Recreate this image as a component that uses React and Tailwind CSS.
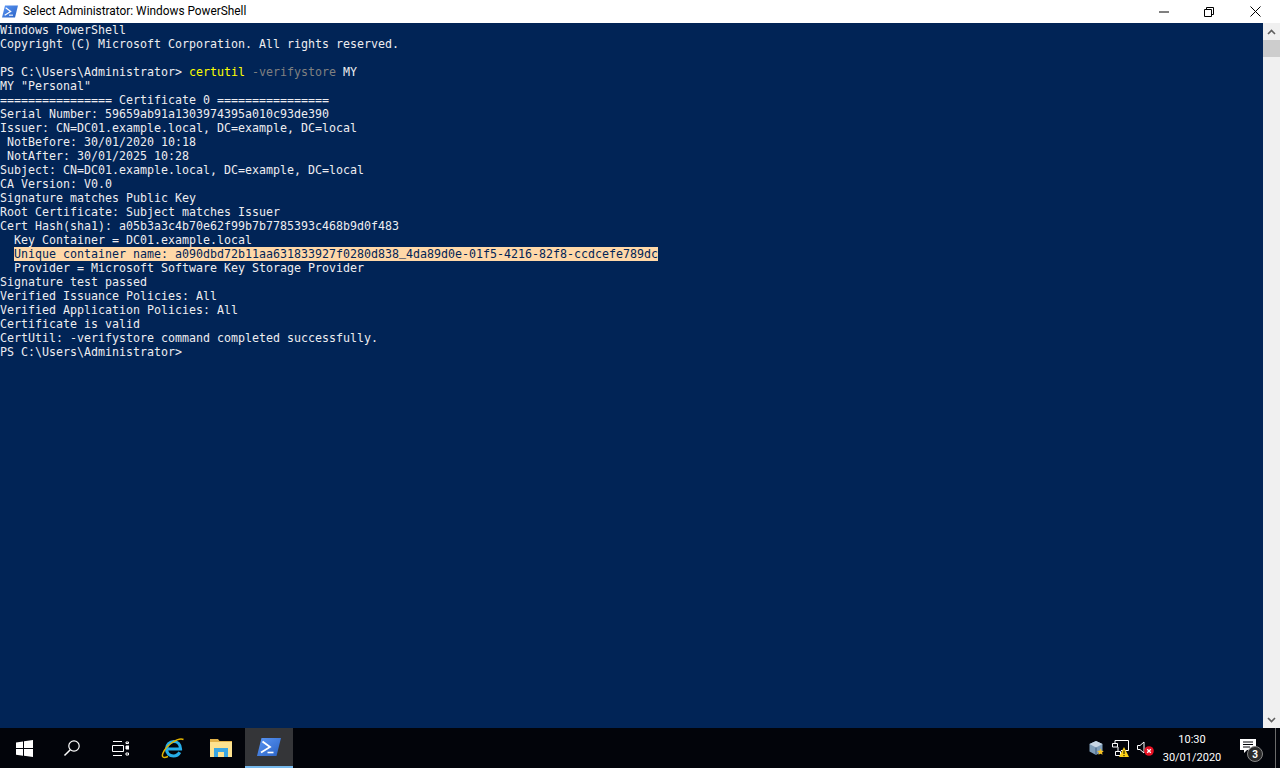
const lines = [
  'Windows PowerShell',
  'Copyright (C) Microsoft Corporation. All rights reserved.',
  '',
  'PROMPT',
  'MY "Personal"',
  '================ Certificate 0 ================',
  'Serial Number: 59659ab91a1303974395a010c93de390',
  'Issuer: CN=DC01.example.local, DC=example, DC=local',
  ' NotBefore: 30/01/2020 10:18',
  ' NotAfter: 30/01/2025 10:28',
  'Subject: CN=DC01.example.local, DC=example, DC=local',
  'CA Version: V0.0',
  'Signature matches Public Key',
  'Root Certificate: Subject matches Issuer',
  'Cert Hash(sha1): a05b3a3c4b70e62f99b7b7785393c468b9d0f483',
  '  Key Container = DC01.example.local',
  'HIGHLIGHT',
  '  Provider = Microsoft Software Key Storage Provider',
  'Signature test passed',
  'Verified Issuance Policies: All',
  'Verified Application Policies: All',
  'Certificate is valid',
  'CertUtil: -verifystore command completed successfully.',
  'PS C:\\Users\\Administrator>',
]

function Line({ text }) {
  if (text === 'PROMPT') {
    return (
      <div>
        PS C:\Users\Administrator&gt; <span className="text-[#ffff00]">certutil</span>{' '}
        <span className="text-[#808080]">-verifystore</span> MY
      </div>
    )
  }
  if (text === 'HIGHLIGHT') {
    // DejaVu's underscore lands under the highlight box, Liberation's stays inside it
    return (
      <div className="h-[14px]">
        {'  '}
        <span className="inline-block h-[14px] bg-[#ffd8a8] text-[#012456]">
          Unique container name: a090dbd72b11aa631833927f0280d838<span className="font-['Liberation_Mono',monospace]">_</span>4da89d0e-01f5-4216-82f8-ccdcefe789dc
        </span>
      </div>
    )
  }
  return <div className="h-[14px]">{text}</div>
}

function PsIcon({ id, width, height }) {
  return (
    <svg width={width} height={height} viewBox="0 0 24 18">
      <defs>
        <linearGradient id={id} x1="0" y1="0" x2="1" y2="1">
          <stop offset="0" stopColor="#5a96f5" />
          <stop offset="1" stopColor="#2a62c4" />
        </linearGradient>
      </defs>
      <path d="M4.500 0H24l-4.500 18H0z" fill={`url(#${id})`} />
      <path d="M5.500 3.500l7.500 5.500-9 5.500" fill="none" stroke="#fff" strokeWidth="1.800" />
      <path d="M10.500 14.500h6" stroke="#fff" strokeWidth="1.600" />
    </svg>
  )
}

function TitleBar() {
  return (
    <div className="h-[23px] bg-white flex items-center shrink-0">
      <div className="w-[23px] pl-[2px] flex items-center"><PsIcon id="ps-title" width={16} height={13} /></div>
      <span className="text-[11.85px] text-black font-['Roboto','Liberation_Sans',sans-serif]">Select Administrator: Windows PowerShell</span>
      <div className="ml-auto mr-[2px] flex items-center h-full">
        <div className="w-[46px] pl-[2px] h-full flex items-center justify-center">
          <svg width="10" height="10" viewBox="0 0 10 10"><path d="M0 5h10" stroke="#000" /></svg>
        </div>
        <div className="w-[46px] h-full flex items-center justify-center">
          <svg width="10" height="10" viewBox="0 0 10 10" fill="none" stroke="#000"><path d="M.5 2.500h7v7h-7zM2.500 2.500v-2h7v7h-2" /></svg>
        </div>
        <div className="w-[46px] h-full flex items-center justify-center">
          <svg width="11" height="11" viewBox="0 0 11 11" stroke="#000"><path d="M.5.5l10 10M10.500.5l-10 10" /></svg>
        </div>
      </div>
    </div>
  )
}

function Scrollbar() {
  return (
    <div className="w-[17px] bg-[#f0f0f0] flex flex-col shrink-0">
      <div className="h-[17px] flex items-center justify-center">
        <svg width="9" height="6" viewBox="0 0 9 6" fill="none" stroke="#606060" strokeWidth="1.600"><path d="M1 5l3.500-3.500L8 5" /></svg>
      </div>
      <div className="h-[17px] bg-[#cdcdcd]" />
      <div className="flex-1" />
      <div className="h-[17px] flex items-center justify-center">
        <svg width="9" height="6" viewBox="0 0 9 6" fill="none" stroke="#606060" strokeWidth="1.600"><path d="M1 1l3.500 3.500L8 1" /></svg>
      </div>
    </div>
  )
}

function TaskButton({ children, active }) {
  return (
    <div className={active
      ? 'w-[48px] h-full flex items-center justify-center bg-[#343538] border-b-[2px] border-[#76b9ed]'
      : 'w-[48px] h-full flex items-center justify-center'}>
      {children}
    </div>
  )
}

function Taskbar() {
  return (
    <div className="h-[40px] bg-[#02040a] flex items-center text-white shrink-0">
      <TaskButton>
        <svg width="17" height="17" viewBox="0 0 17 17" fill="#fff"><path d="M0 2.400l7-1v6.700H0zM8 1.300l9-1.300v8.100H8zM0 9h7v6.700l-7-1zM8 9h9v8l-9-1.300z" /></svg>
      </TaskButton>
      <TaskButton>
        <svg width="18" height="18" viewBox="0 0 18 18" fill="none" stroke="#fff" strokeWidth="1.200"><circle cx="11" cy="7" r="5.200" /><path d="M7.300 10.700L1.500 16.500" strokeWidth="1.500" /></svg>
      </TaskButton>
      <TaskButton>
        <svg width="17" height="15" viewBox="0 0 17 15" fill="none" stroke="#fff"><path d="M1 .5h9M1 14.500h9M.5 4.500h11v6H.5z" /><path d="M14 1h2.500v1.500H14z" /><path d="M14 5h3v3h-3z" fill="#fff" /><path d="M14 12h2.500v2H14z" /></svg>
      </TaskButton>
      <div className="ml-[5px] h-full">
        <TaskButton>
          <svg width="24" height="24" viewBox="0 0 24 24" fill="none">
            <path d="M6 13h13.500c0-4.500-3-7.500-6.800-7.500S5.500 8.700 5.500 13s3 7 7 7c2.800 0 5-1.300 6.200-3.700" stroke="#27aee8" strokeWidth="3.200" />
            <path d="M22.500 3.500C17 1 5 9.500 2 17c-1.600 4 0 5.500 5 3.500" stroke="#e3b400" strokeWidth="1.500" />
          </svg>
        </TaskButton>
      </div>
      <TaskButton>
        <svg width="22" height="18" viewBox="0 0 22 18">
          <path d="M0 0h8l1.500 2H22v16H0z" fill="#e2b24a" />
          <path d="M0 3h22v15H0z" fill="#fde28f" />
          <path d="M4 9h14v9h-4v-5H8v5H4z" fill="#3aa6e2" />
        </svg>
      </TaskButton>
      <TaskButton active><PsIcon id="ps-task" width={24} height={18} /></TaskButton>
      <div className="ml-auto flex items-center h-full">
        <svg width="16" height="16" viewBox="0 0 16 16" className="mr-[8px]">
          <path d="M8 1l6.500 3v7.500L8 15l-6.500-3.500V4z" fill="#7f9db9" />
          <path d="M8 1l6.500 3L8 7.500 1.500 4z" fill="#c8d6e5" />
          <path d="M8 7.500V15" stroke="#3d5a80" />
          <path d="M12.500 8.500l1 2.200 2.300.3-1.700 1.500.5 2.300-2.100-1.100-2.100 1.100.5-2.300-1.700-1.500 2.300-.3z" fill="#f7c325" />
        </svg>
        <svg width="17" height="17" viewBox="0 0 17 17" className="mr-[8px]">
          <path d="M3 .5h13.500v10H9M3 .5v3M6 7v5" fill="none" stroke="#fff" />
          <path d="M.5 3.500h5v3.500h-5zM3.500 11.500h5v4h-5z" fill="none" stroke="#fff" />
          <path d="M12 7l5 10H7z" fill="#fcd116" />
          <path d="M12 10.500v3.500M12 15v1.200" stroke="#000" />
        </svg>
        <svg width="17" height="15" viewBox="0 0 17 15" className="mr-[4px]">
          <path d="M.5 4.500h2.500l4-3.500v11l-4-3.500H.5z" fill="none" stroke="#fff" />
          <circle cx="12" cy="10" r="4.800" fill="#e81123" />
          <path d="M10.200 8.200l3.600 3.600M13.800 8.200l-3.600 3.600" stroke="#fff" strokeWidth="1.300" />
        </svg>
        <div className="w-[68px] pt-[1px] text-center text-[11px] leading-[18px] text-white font-['Roboto','Liberation_Sans',sans-serif]">
          <div>10:30</div>
          <div>30/01/2020</div>
        </div>
        <div className="relative w-[47px] ml-[2px] h-full flex items-center justify-center">
          <svg width="16" height="14" viewBox="0 0 16 14" className="mb-[4px] mr-[8px]"><path d="M0 0h16v11H7l-3 3v-3H0z" fill="#fff" /><path d="M3 3h10M3 5.500h10M3 8h7" stroke="#02040a" /></svg>
          <span className="absolute left-[19px] top-[18px] w-[16px] h-[16px] rounded-full bg-[#2b2b2b] border border-[#888] flex items-center justify-center text-[10px] font-bold text-white font-['Roboto','Liberation_Sans',sans-serif]">3</span>
        </div>
        <div className="w-[5px] h-full border-l border-[#6b6b6b]" />
      </div>
    </div>
  )
}

export default function App() {
  return (
    <div className="w-[1280px] h-[768px] flex flex-col overflow-hidden">
      <TitleBar />
      <div className="flex-1 flex min-h-0">
        <div className="flex-1 bg-[#012456] text-[#eeedf0] whitespace-pre text-[11.63px] leading-[14px] font-['DejaVu_Sans_Mono',monospace]">
          {lines.map((l, i) => <Line key={i} text={l} />)}
        </div>
        <Scrollbar />
      </div>
      <Taskbar />
    </div>
  )
}
